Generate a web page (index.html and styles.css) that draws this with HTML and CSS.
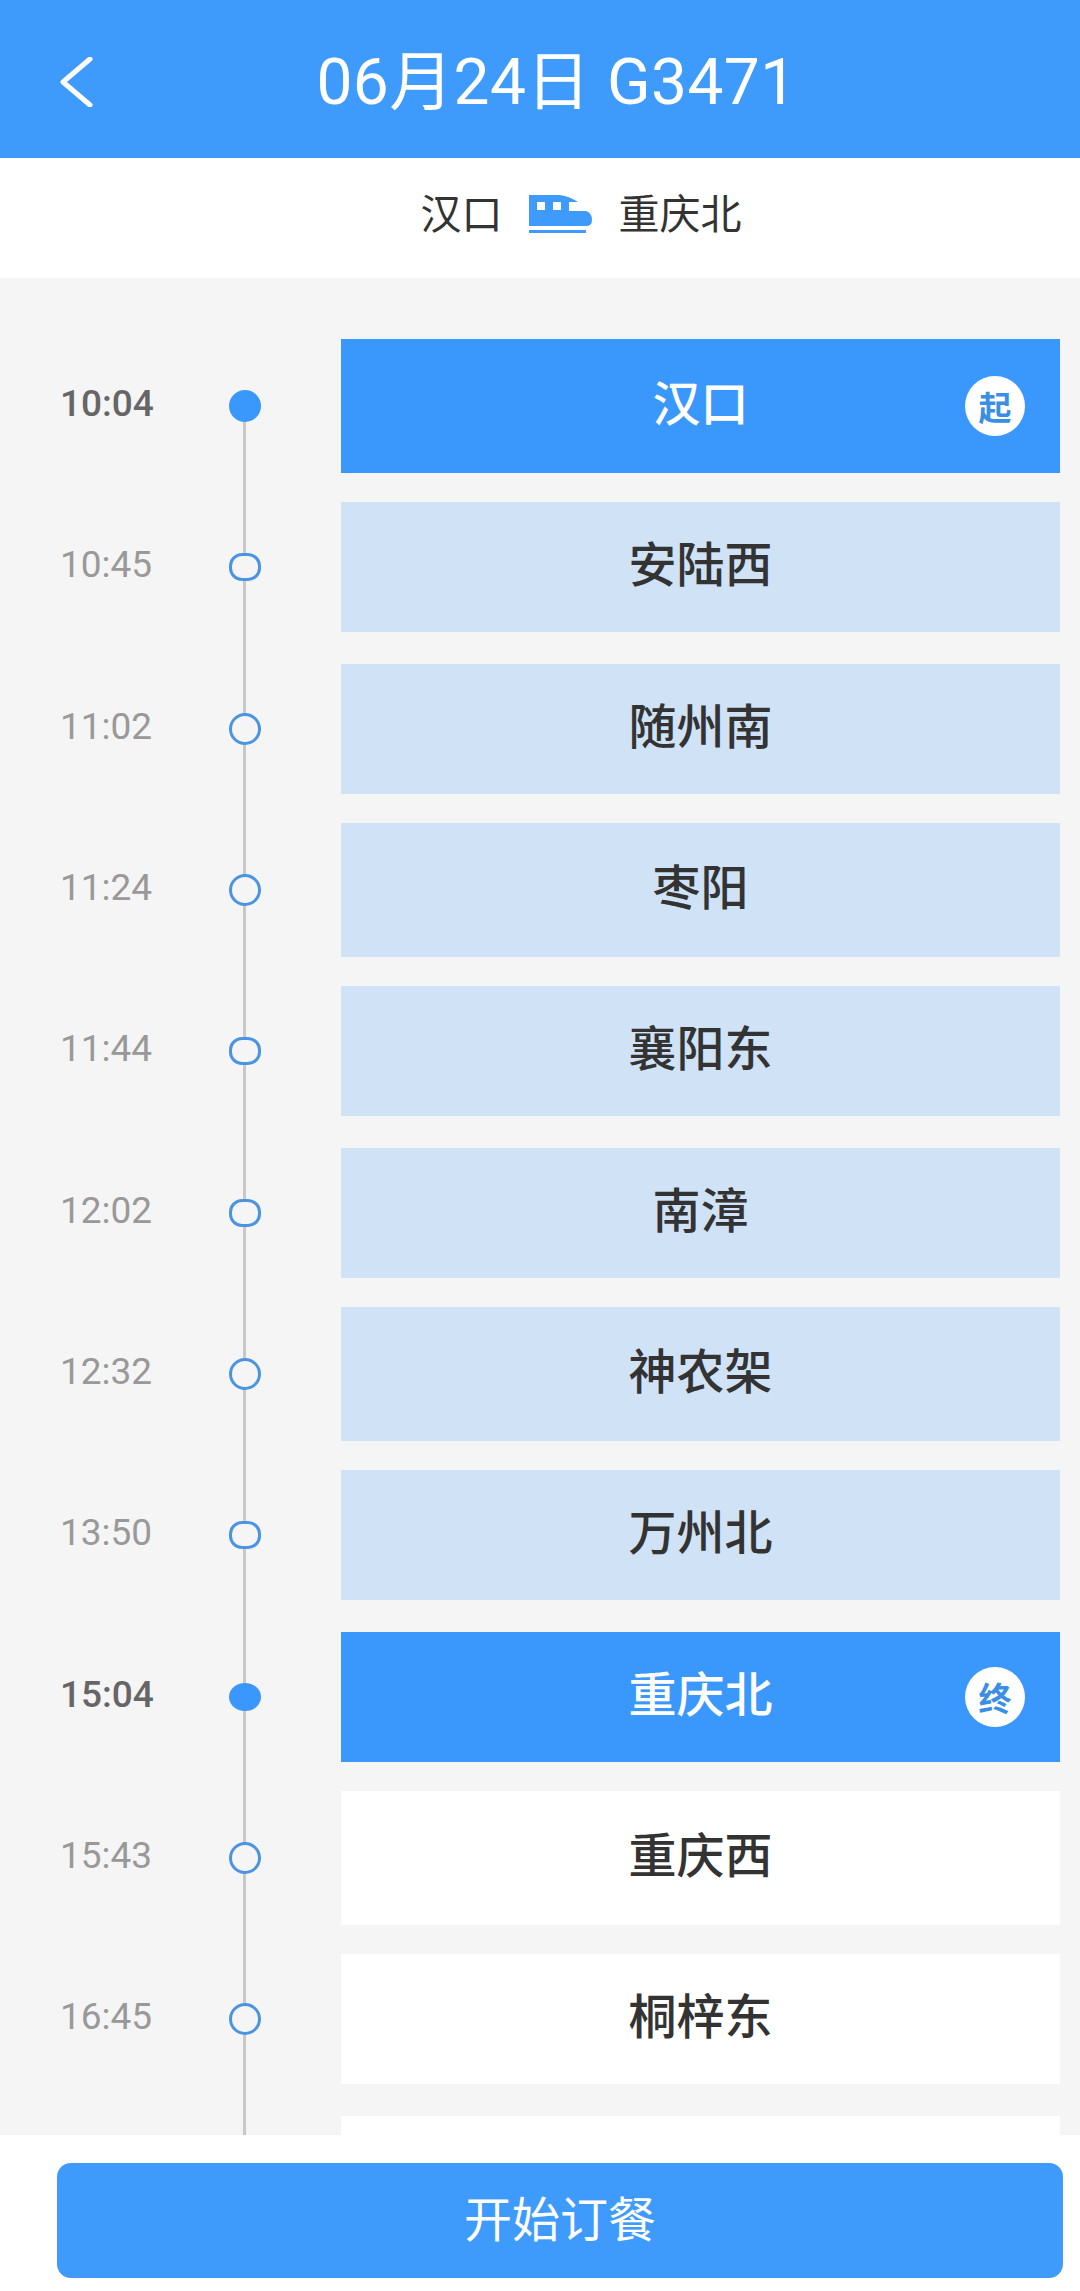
FILE: index.html

```html
<!DOCTYPE html>
<html>
<head>
  <meta charset="UTF-8">
  <title>06月24日 G3471</title>
  <meta name="viewport" content="width=device-width, initial-scale=1.0">
  <link rel="stylesheet" href="styles.css">
</head>
<body>
  <header class="topbar">
    <svg class="back" viewBox="0 0 35 50" width="35" height="50">
      <path d="M32 2 L5 25 L32 48" fill="none" stroke="#fff" stroke-width="5" stroke-linecap="round" stroke-linejoin="round"/>
    </svg>
    <h1 class="title">06月24日 G3471</h1>
  </header>

  <div class="route">
    <span>汉口</span>
    <svg class="train" viewBox="0 0 64 38" width="64" height="38">
      <path d="M0 0 H30 Q40 1 49 7 H40 V16 H57 Q63 18 63 25 Q63 31 57 31 H0 Z" fill="#3e9bfc"/>
      <rect x="8" y="7" width="8" height="8" fill="#fff"/>
      <rect x="24" y="7" width="8" height="8" fill="#fff"/>
      <rect x="0" y="35" width="57" height="3" fill="#3e9bfc"/>
    </svg>
    <span>重庆北</span>
  </div>

  <main class="stops">
    <div class="row main-stop">
      <span class="time">10:04</span>
      <i class="dot filled"></i>
      <div class="card active">汉口<b class="badge">起</b></div>
    </div>
    <div class="row">
      <span class="time">10:45</span>
      <i class="dot flat"></i>
      <div class="card onway">安陆西</div>
    </div>
    <div class="row">
      <span class="time">11:02</span>
      <i class="dot"></i>
      <div class="card onway">随州南</div>
    </div>
    <div class="row">
      <span class="time">11:24</span>
      <i class="dot"></i>
      <div class="card onway">枣阳</div>
    </div>
    <div class="row">
      <span class="time">11:44</span>
      <i class="dot flat"></i>
      <div class="card onway">襄阳东</div>
    </div>
    <div class="row">
      <span class="time">12:02</span>
      <i class="dot flat"></i>
      <div class="card onway">南漳</div>
    </div>
    <div class="row">
      <span class="time">12:32</span>
      <i class="dot"></i>
      <div class="card onway">神农架</div>
    </div>
    <div class="row">
      <span class="time">13:50</span>
      <i class="dot flat"></i>
      <div class="card onway">万州北</div>
    </div>
    <div class="row main-stop">
      <span class="time">15:04</span>
      <i class="dot filled flat"></i>
      <div class="card active">重庆北<b class="badge">终</b></div>
    </div>
    <div class="row">
      <span class="time">15:43</span>
      <i class="dot"></i>
      <div class="card">重庆西</div>
    </div>
    <div class="row">
      <span class="time">16:45</span>
      <i class="dot"></i>
      <div class="card">桐梓东</div>
    </div>
    <div class="row">
      <span class="time"></span>
      <i class="dot"></i>
      <div class="card"></div>
    </div>
  </main>

  <footer class="bottom">
    <button class="order">开始订餐</button>
  </footer>
</body>
</html>
```

FILE: styles.css

```css
* {
  box-sizing: border-box;
}
body {
  margin: 0;
  height: 2291px;
  overflow: hidden;
  display: flex;
  flex-direction: column;
  font-family: "Noto Sans CJK SC", sans-serif;
  background-color: #fff;
  color: #333;
}
.topbar {
  height: 158px;
  flex: none;
  display: flex;
  align-items: center;
  padding-left: 58px;
  background-color: #3e9bfc;
  color: #fff;
}
.back {
  flex: none;
  margin-top: 6px;
}
.title {
  flex: 1;
  margin: 0;
  padding-top: 8px;
  padding-right: 60px;
  text-align: center;
  font-family: Roboto, "Noto Sans CJK SC", sans-serif;
  font-size: 64px;
  font-weight: 400;
  line-height: 1;
  letter-spacing: 0.4px;
}
.route {
  height: 120px;
  flex: none;
  display: flex;
  align-items: center;
  justify-content: center;
  gap: 26px;
  padding-left: 82px;
  padding-bottom: 8px;
  font-size: 41px;
}
.route span {
  margin-bottom: 6px;
}
.stops {
  position: relative;
  flex: 1;
  min-height: 0;
  overflow: hidden;
  padding: 61px 20px 0 60px;
  background-color: #f5f5f5;
}
/* the rail behind the dots */
.stops::before {
  content: "";
  position: absolute;
  top: 128px;
  bottom: 0;
  left: 243px;
  width: 3px;
  background-color: #c8c8c8;
}
.row {
  display: flex;
  align-items: center;
  height: 130px;
  margin-bottom: 29px;
}
.row:nth-child(3n+1) {
  height: 134px;
}
.row:nth-child(3n+2) {
  margin-bottom: 32px;
}
.time {
  width: 169px;
  flex: none;
  margin-bottom: 5px;
  font-family: Roboto, sans-serif;
  font-size: 37px;
  color: #999;
}
.main-stop .time {
  font-weight: 500;
  color: #666;
}
.dot {
  position: relative;
  width: 32px;
  height: 32px;
  flex: none;
  border: 3px solid #4a94e2;
  border-radius: 50%;
  background-color: #f5f5f5;
}
.dot.flat {
  height: 28px;
  border-radius: 13px;
}
.dot.filled {
  border-color: #3a98fc;
  background-color: #3a98fc;
}
.dot.filled.flat {
  border-radius: 50%;
}
.card {
  position: relative;
  width: 719px;
  height: 100%;
  flex: none;
  margin-left: 80px;
  display: flex;
  align-items: center;
  justify-content: center;
  padding-bottom: 13px;
  font-size: 48px;
  font-weight: 500;
  background-color: #fff;
}
.card.onway {
  background-color: #cfe2f6;
}
.card.active {
  background-color: #3a98fc;
  color: #fff;
}
.badge {
  position: absolute;
  top: 50%;
  right: 35px;
  width: 60px;
  height: 60px;
  margin-top: -30px;
  display: flex;
  align-items: center;
  justify-content: center;
  border-radius: 50%;
  font-size: 33px;
  font-weight: 700;
  background-color: #fff;
  color: #3a8ee4;
}
.bottom {
  height: 156px;
  flex: none;
  padding: 28px 17px 13px 57px;
  background-color: #fff;
}
.order {
  width: 100%;
  height: 100%;
  padding: 0 0 9px;
  border: none;
  border-radius: 14px;
  font-family: inherit;
  font-size: 48px;
  background-color: #3e9bfc;
  color: #fff;
}
```
